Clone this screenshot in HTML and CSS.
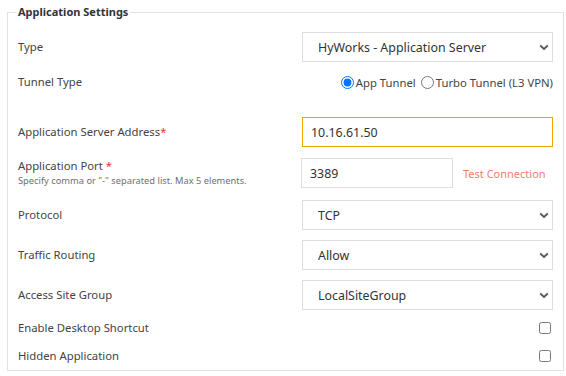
FILE: index.html
```html
<!DOCTYPE html>
<html lang="en">
<head>
  <meta charset="UTF-8">
  <meta name="viewport" content="width=device-width, initial-scale=1.0">
  <title>Application Settings</title>
  <link rel="stylesheet" href="styles.css">
</head>
<body>
  <fieldset class="settings">
    <legend>Application Settings</legend>

    <div class="row row-type">
      <label class="field-label">Type</label>
      <div class="select-wrap">
        <select class="control">
          <option>HyWorks - Application Server</option>
        </select>
        <svg class="chevron" width="10" height="7" viewBox="0 0 10 7"><path d="M1.2 1.5 L5 5 L8.8 1.5" fill="none" stroke="#555" stroke-width="1.8"/></svg>
      </div>
    </div>

    <div class="row row-tunnel">
      <label class="field-label">Tunnel Type</label>
      <div class="radios">
        <label><input type="radio" name="tunnel" checked>App Tunnel</label>
        <label><input type="radio" name="tunnel">Turbo Tunnel (L3 VPN)</label>
      </div>
    </div>

    <div class="row row-address">
      <label class="field-label">Application Server Address<span class="req">*</span></label>
      <input type="text" class="control focused" value="10.16.61.50">
    </div>

    <div class="row row-port">
      <div class="field-label">
        <div>Application Port <span class="req">*</span></div>
        <div class="hint">Specify comma or "-" separated list. Max 5 elements.</div>
      </div>
      <div class="port-group">
        <input type="text" class="control port" value="3389">
        <a class="test-link">Test Connection</a>
      </div>
    </div>

    <div class="row">
      <label class="field-label">Protocol</label>
      <div class="select-wrap">
        <select class="control"><option>TCP</option></select>
        <svg class="chevron" width="10" height="7" viewBox="0 0 10 7"><path d="M1.2 1.5 L5 5 L8.8 1.5" fill="none" stroke="#555" stroke-width="1.8"/></svg>
      </div>
    </div>

    <div class="row">
      <label class="field-label">Traffic Routing</label>
      <div class="select-wrap">
        <select class="control"><option>Allow</option></select>
        <svg class="chevron" width="10" height="7" viewBox="0 0 10 7"><path d="M1.2 1.5 L5 5 L8.8 1.5" fill="none" stroke="#555" stroke-width="1.8"/></svg>
      </div>
    </div>

    <div class="row">
      <label class="field-label">Access Site Group</label>
      <div class="select-wrap">
        <select class="control"><option>LocalSiteGroup</option></select>
        <svg class="chevron" width="10" height="7" viewBox="0 0 10 7"><path d="M1.2 1.5 L5 5 L8.8 1.5" fill="none" stroke="#555" stroke-width="1.8"/></svg>
      </div>
    </div>

    <div class="row row-check">
      <label class="field-label">Enable Desktop Shortcut</label>
      <input type="checkbox" class="check">
    </div>

    <div class="row row-check">
      <label class="field-label">Hidden Application</label>
      <input type="checkbox" class="check">
    </div>
  </fieldset>
</body>
</html>
```

FILE: styles.css
```css
body {
  margin: 0;
  padding: 0;
  font-family: 'Noto Sans', 'Open Sans', sans-serif;
  font-size: 11.3px;
  color: #444;
  background-color: #fff;
}

.settings {
  margin: 4px 2px 0 7px;
  padding: 0 10px 6px 10px;
  border: 1px solid #e2e2e2;
  height: 367px;
  box-sizing: border-box;
}

.settings legend {
  margin-left: -2px;
  padding: 0 2px;
  font-weight: bold;
  font-size: 11px;
  line-height: 16px;
  color: #333;
}

.row {
  display: flex;
  align-items: center;
  justify-content: space-between;
  min-height: 30px;
  margin-top: 10px;
}

.row-type {
  margin-top: 12px;
}

.row-tunnel {
  min-height: 20px;
  margin-bottom: 25px;
}

.row-port {
  margin-top: 11px;
  margin-bottom: 12px;
}

.row-check {
  min-height: 20px;
  margin-top: 8px;
}

.field-label {
  line-height: 16px;
}

.req {
  color: #e33;
}

.hint {
  font-size: 9.3px;
  color: #707070;
  line-height: 14px;
}

.select-wrap {
  position: relative;
  width: 251px;
}

.control {
  width: 251px;
  height: 30px;
  box-sizing: border-box;
  border: 1px solid #dedede;
  border-radius: 0;
  background-color: #fff;
  font-family: inherit;
  font-size: 12.4px;
  color: #333;
  outline: none;
}

select.control {
  appearance: none;
  padding: 0 12px 0 15px;
}

.chevron {
  position: absolute;
  right: 4px;
  top: 12px;
  pointer-events: none;
}

input.control {
  padding: 0 8px;
}

input.focused {
  border-color: #f5a300;
}

.port-group {
  display: flex;
  align-items: center;
  width: 252px;
}

.control.port {
  width: 152px;
  flex-shrink: 0;
}

.test-link {
  margin-left: 10px;
  color: #f07e6e;
  font-size: 11px;
  white-space: nowrap;
  cursor: pointer;
}

.radios {
  display: flex;
  align-items: center;
  font-size: 11.3px;
}

.radios label {
  display: flex;
  align-items: center;
}

.radios input {
  margin: 0 2px 0 5px;
  width: 13px;
  height: 13px;
}

.check {
  margin: 0 2px 0 0;
  width: 12px;
  height: 12px;
}
```
